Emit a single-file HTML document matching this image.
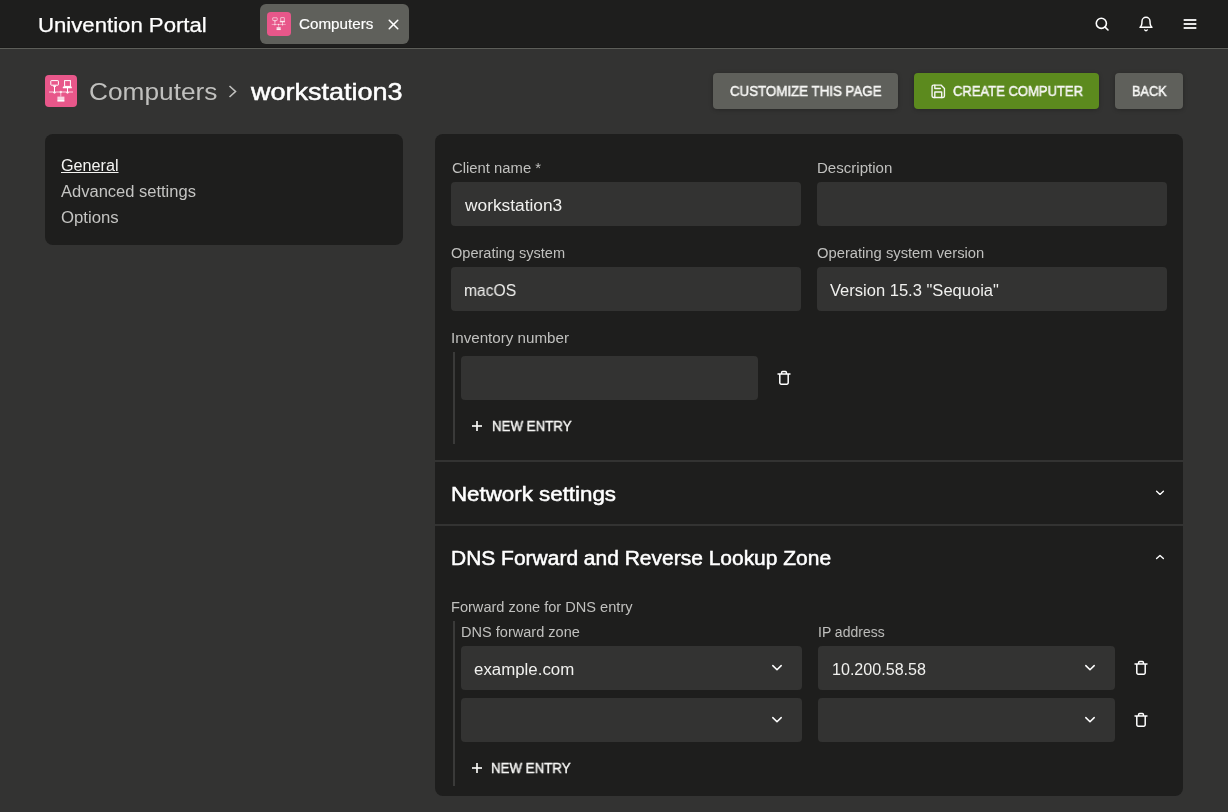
<!DOCTYPE html>
<html><head><meta charset="utf-8">
<style>
*{box-sizing:border-box;margin:0;padding:0}
html,body{width:1228px;height:812px;overflow:hidden;background:#333332;font-family:"Liberation Sans",sans-serif;color:#f2f2f2}
.a{position:absolute;white-space:nowrap}
.t{line-height:1;will-change:transform}
#hdr{left:0;top:0;width:1228px;height:48px;background:#1e1e1d;border-bottom:1px solid #1a1a19}
#hdrline{left:0;top:48px;width:1228px;height:1px;background:#5d5e59}
#tab{left:260px;top:4px;width:149px;height:40px;background:#5f605b;border-radius:6px}
.pink{background:#e8578a}
.btn{height:36px;border-radius:4px;background:#5f605b;box-shadow:0 1px 4px rgba(0,0,0,.25)}
.bt{font-size:14px;color:#f6f6f4;-webkit-text-stroke:0.5px #f6f6f4;transform-origin:0 0}
.card{background:#1e1e1d;border-radius:8px}
.nav{font-size:16px;color:#c4c4c2}
.lbl{font-size:14px;color:#c0c0be}
.inp{background:#333332;border-radius:4px;height:44px}
.it{font-size:16px;color:#f0f0ee}
.div{left:435px;width:748px;height:2px;background:#333332}
.h2{font-size:20px;color:#fff;-webkit-text-stroke:0.5px #fff}
.vline{width:2px;background:#3a3a39}
.ne{font-size:14px;color:#f6f6f4;-webkit-text-stroke:0.4px #f6f6f4;transform-origin:0 0}
svg{position:absolute;overflow:visible}
</style></head><body>
<svg width="0" height="0" style="position:absolute">
 <defs>
  <g id="compg">
   <g fill="none" stroke="#fff" stroke-width="1">
    <rect x="5.8" y="5.6" width="7.6" height="4.6" rx=".5"/>
    <rect x="19.6" y="5.6" width="5.8" height="5.8"/>
    <line x1="9.5" y1="12" x2="9.5" y2="17.8"/>
    <line x1="22.5" y1="13" x2="22.5" y2="17.8"/>
    <line x1="4" y1="17" x2="28" y2="17" stroke-opacity=".75"/>
    <line x1="15.8" y1="17" x2="15.8" y2="21.6" stroke-opacity=".6"/>
    <path d="M8.4 17.2a1.1 1.1 0 0 0 2.2 0M21.4 17.2a1.1 1.1 0 0 0 2.2 0" stroke-opacity=".8"/>
   </g>
   <g fill="#fff">
    <path d="M8 10.5h3.2l-.5 1.6H8.5z"/>
    <rect x="17.8" y="11.6" width="9" height="1.7" rx=".3"/>
    <rect x="12.4" y="21.6" width="7" height="3.6" fill-opacity=".75"/>
    <rect x="12.4" y="25" width="7" height="1.6"/>
    <circle cx="15.8" cy="17" r="1.2" fill-opacity=".7"/>
   </g>
  </g>
 </defs>
</svg>

<div id="hdr" class="a"></div>
<div id="hdrline" class="a"></div>
<div class="a t" style="left:37.5px;top:15px;font-size:20px;color:#fff;-webkit-text-stroke:0.25px #fff;transform:scaleX(1.108);transform-origin:0 0">Univention Portal</div>
<div id="tab" class="a"></div>
<svg style="left:267px;top:12px" width="24" height="24" viewBox="0 0 32 32"><rect width="32" height="32" rx="5" fill="#e8578a"/><use href="#compg" transform="translate(15.6 15.8) scale(.78) translate(-16 -16)"/></svg>
<div class="a t" style="left:298.5px;top:17px;font-size:14px;color:#fff;-webkit-text-stroke:0.15px #fff;transform:scaleX(1.085);transform-origin:0 0">Computers</div>
<svg style="left:384.5px;top:15.5px" width="17" height="17" viewBox="0 0 24 24" fill="none" stroke="#fff" stroke-width="2.2" stroke-linecap="round"><line x1="18" y1="6" x2="6" y2="18"/><line x1="6" y1="6" x2="18" y2="18"/></svg>

<!-- header icons -->
<svg style="left:1094px;top:16px" width="16" height="16" viewBox="0 0 24 24" fill="none" stroke="#fff" stroke-width="2.4" stroke-linecap="round"><circle cx="11" cy="11" r="7.6"/><line x1="21" y1="21" x2="16.65" y2="16.65"/></svg>
<svg style="left:1138px;top:16px" width="16" height="16" viewBox="0 0 24 24" fill="none" stroke="#fff" stroke-width="2.2" stroke-linecap="round" stroke-linejoin="round"><path d="M18 8A6 6 0 0 0 6 8c0 7-3 9-3 9h18s-3-2-3-9"/><path d="M13.73 21a2 2 0 0 1-3.46 0"/></svg>
<svg style="left:1182px;top:16px" width="16" height="16" viewBox="0 0 24 24" fill="none" stroke="#e6e6e6" stroke-width="3" stroke-linecap="butt"><line x1="2.5" y1="6" x2="21.5" y2="6"/><line x1="2.5" y1="12" x2="21.5" y2="12"/><line x1="2.5" y1="18" x2="21.5" y2="18"/></svg>

<!-- breadcrumb -->
<svg style="left:45px;top:75px" width="32" height="32" viewBox="0 0 32 32"><rect width="32" height="32" rx="4" fill="#e8578a"/><use href="#compg"/></svg>
<div class="a t" style="left:88.5px;top:79.5px;font-size:24px;color:#c0c0be;transform:scaleX(1.094);transform-origin:0 0">Computers</div>
<svg style="left:228px;top:85px" width="10" height="13" viewBox="0 0 10 13" fill="none" stroke="#c0c0be" stroke-width="1.6"><polyline points="1.5,1 7.5,6.5 1.5,12"/></svg>
<div class="a t" style="left:250.7px;top:79.5px;font-size:24px;color:#fff;-webkit-text-stroke:0.5px #fff;transform:scaleX(1.125);transform-origin:0 0">workstation3</div>

<div class="a btn" style="left:713px;top:73px;width:185px"></div>
<div class="a t bt" style="left:729.5px;top:83.5px;transform:scaleX(0.95)">CUSTOMIZE THIS PAGE</div>
<div class="a btn" style="left:914px;top:73px;width:185px;background:#5c8a1e"></div>
<svg style="left:929.8px;top:82.8px" width="16.5" height="16.5" viewBox="0 0 24 24" fill="none" stroke="#f6f6f4" stroke-width="2" stroke-linecap="round" stroke-linejoin="round"><path d="M19 21H5a2 2 0 0 1-2-2V5a2 2 0 0 1 2-2h11l5 5v11a2 2 0 0 1-2 2z"/><polyline points="17 21 17 13 7 13 7 21"/><polyline points="7 3 7 8 15 8"/></svg>
<div class="a t bt" style="left:952.5px;top:83.5px;transform:scaleX(0.93)">CREATE COMPUTER</div>
<div class="a btn" style="left:1115px;top:73px;width:68px"></div>
<div class="a t bt" style="left:1131.5px;top:83.5px;transform:scaleX(0.91)">BACK</div>

<!-- nav -->
<div class="a card" style="left:45px;top:134px;width:358px;height:111px"></div>
<div class="a t nav" style="left:61px;top:158px;color:#f4f4f2;text-decoration:underline;transform:scaleX(1.0105);transform-origin:0 0">General</div>
<div class="a t nav" style="left:61px;top:183.6px;transform:scaleX(1.0318);transform-origin:0 0">Advanced settings</div>
<div class="a t nav" style="left:61px;top:209.8px;transform:scaleX(1.0468);transform-origin:0 0">Options</div>

<!-- main -->
<div class="a card" style="left:435px;top:134px;width:748px;height:662px"></div>
<div class="a t lbl" style="left:451.5px;top:161.3px;transform:scaleX(1.0600);transform-origin:0 0">Client name *</div>
<div class="a inp" style="left:451px;top:182px;width:350px"></div>
<div class="a t it" style="left:464.8px;top:197.5px;transform:scaleX(1.0827);transform-origin:0 0">workstation3</div>
<div class="a t lbl" style="left:816.6px;top:161.3px;transform:scaleX(1.075);transform-origin:0 0">Description</div>
<div class="a inp" style="left:817px;top:182px;width:350px"></div>
<div class="a t lbl" style="left:451px;top:246px;transform:scaleX(1.0397);transform-origin:0 0">Operating system</div>
<div class="a inp" style="left:451px;top:267px;width:350px"></div>
<div class="a t it" style="left:464px;top:282.5px;transform:scaleX(0.9760);transform-origin:0 0">macOS</div>
<div class="a t lbl" style="left:817px;top:246px;transform:scaleX(1.0536);transform-origin:0 0">Operating system version</div>
<div class="a inp" style="left:817px;top:267px;width:350px"></div>
<div class="a t it" style="left:830px;top:282.5px;transform:scaleX(1.0331);transform-origin:0 0">Version 15.3 "Sequoia"</div>
<div class="a t lbl" style="left:451px;top:331.3px;transform:scaleX(1.0832);transform-origin:0 0">Inventory number</div>
<div class="a vline" style="left:453px;top:352px;height:92px"></div>
<div class="a inp" style="left:461px;top:356px;width:297px"></div>
<svg style="left:777px;top:370px" width="14" height="16" viewBox="0 0 14 16" fill="none" stroke="#fff" stroke-width="1.5" stroke-linejoin="round"><line x1="0.5" y1="4" x2="13.5" y2="4"/><path d="M2.8 4v8.8a1.4 1.4 0 0 0 1.4 1.4h5.6a1.4 1.4 0 0 0 1.4-1.4V4"/><path d="M4.6 4V2.5a1 1 0 0 1 1-1h2.8a1 1 0 0 1 1 1V4"/></svg>
<svg style="left:471px;top:420px" width="12" height="12" viewBox="0 0 12 12" stroke="#f6f6f4" stroke-width="1.7"><line x1="6" y1="1" x2="6" y2="11"/><line x1="1" y1="6" x2="11" y2="6"/></svg>
<div class="a t ne" style="left:491.8px;top:418.7px;transform:scaleX(0.9496)">NEW ENTRY</div>

<div class="a div" style="top:460px"></div>
<div class="a t h2" style="left:451px;top:484px;transform:scaleX(1.116);transform-origin:0 0">Network settings</div>
<svg style="left:1154px;top:487px" width="12" height="12" viewBox="0 0 12 12" fill="none" stroke="#fff" stroke-width="1.35" stroke-linecap="round" stroke-linejoin="round"><polyline points="2.6,4.2 6,7.4 9.4,4.2"/></svg>
<div class="a div" style="top:524px"></div>
<div class="a t h2" style="left:450.8px;top:548px;transform:scaleX(1.0488);transform-origin:0 0">DNS Forward and Reverse Lookup Zone</div>
<svg style="left:1154px;top:551px" width="12" height="12" viewBox="0 0 12 12" fill="none" stroke="#fff" stroke-width="1.35" stroke-linecap="round" stroke-linejoin="round"><polyline points="2.6,7.6 6,4.4 9.4,7.6"/></svg>

<div class="a t lbl" style="left:451px;top:600.3px;transform:scaleX(1.0416);transform-origin:0 0">Forward zone for DNS entry</div>
<div class="a vline" style="left:453px;top:621px;height:165px"></div>
<div class="a t lbl" style="left:461px;top:625.2px;transform:scaleX(1.0393);transform-origin:0 0">DNS forward zone</div>
<div class="a t lbl" style="left:818px;top:625.2px;transform:scaleX(0.9973);transform-origin:0 0">IP address</div>
<div class="a inp" style="left:461px;top:646px;width:341px"></div>
<div class="a t it" style="left:474px;top:661.5px;transform:scaleX(1.0537);transform-origin:0 0">example.com</div>
<div class="a inp" style="left:818px;top:646px;width:297px"></div>
<div class="a t it" style="left:831.5px;top:661.5px;transform:scaleX(1.0059);transform-origin:0 0">10.200.58.58</div>
<div class="a inp" style="left:461px;top:698px;width:341px"></div>
<div class="a inp" style="left:818px;top:698px;width:297px"></div>
<svg style="left:769px;top:660.3px" width="16" height="16" viewBox="0 0 16 16" fill="none" stroke="#fff" stroke-width="1.5" stroke-linecap="round" stroke-linejoin="round"><polyline points="3.8,5.6 8,9.8 12.2,5.6"/></svg>
<svg style="left:769px;top:712.3px" width="16" height="16" viewBox="0 0 16 16" fill="none" stroke="#fff" stroke-width="1.5" stroke-linecap="round" stroke-linejoin="round"><polyline points="3.8,5.6 8,9.8 12.2,5.6"/></svg>
<svg style="left:1082px;top:660.3px" width="16" height="16" viewBox="0 0 16 16" fill="none" stroke="#fff" stroke-width="1.5" stroke-linecap="round" stroke-linejoin="round"><polyline points="3.8,5.6 8,9.8 12.2,5.6"/></svg>
<svg style="left:1082px;top:712.3px" width="16" height="16" viewBox="0 0 16 16" fill="none" stroke="#fff" stroke-width="1.5" stroke-linecap="round" stroke-linejoin="round"><polyline points="3.8,5.6 8,9.8 12.2,5.6"/></svg>
<svg style="left:1134px;top:660px" width="14" height="16" viewBox="0 0 14 16" fill="none" stroke="#fff" stroke-width="1.5" stroke-linejoin="round"><line x1="0.5" y1="4" x2="13.5" y2="4"/><path d="M2.8 4v8.8a1.4 1.4 0 0 0 1.4 1.4h5.6a1.4 1.4 0 0 0 1.4-1.4V4"/><path d="M4.6 4V2.5a1 1 0 0 1 1-1h2.8a1 1 0 0 1 1 1V4"/></svg>
<svg style="left:1134px;top:712px" width="14" height="16" viewBox="0 0 14 16" fill="none" stroke="#fff" stroke-width="1.5" stroke-linejoin="round"><line x1="0.5" y1="4" x2="13.5" y2="4"/><path d="M2.8 4v8.8a1.4 1.4 0 0 0 1.4 1.4h5.6a1.4 1.4 0 0 0 1.4-1.4V4"/><path d="M4.6 4V2.5a1 1 0 0 1 1-1h2.8a1 1 0 0 1 1 1V4"/></svg>
<svg style="left:471px;top:762px" width="12" height="12" viewBox="0 0 12 12" stroke="#f6f6f4" stroke-width="1.7"><line x1="6" y1="1" x2="6" y2="11"/><line x1="1" y1="6" x2="11" y2="6"/></svg>
<div class="a t ne" style="left:491.2px;top:760.5px;transform:scaleX(0.9496)">NEW ENTRY</div>
</body></html>
